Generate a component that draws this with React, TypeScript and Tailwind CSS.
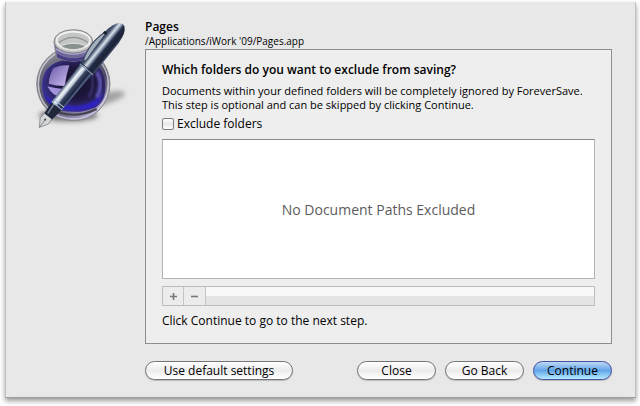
import { useState } from 'react'
import clsx from 'clsx'

function InkwellIcon() {
  return (
    <svg viewBox="90 50 300 345" className="h-[115px] w-[100px]" aria-hidden="true">
      <defs>
        <linearGradient id="glass" x1="0" y1="0" x2="0.6" y2="1">
          <stop offset="0" stopColor="#b4b4b8" />
          <stop offset="0.3" stopColor="#68677a" />
          <stop offset="0.7" stopColor="#4d4a66" />
          <stop offset="1" stopColor="#a9a2c4" />
        </linearGradient>
        <radialGradient id="ink" cx="0.55" cy="0.45" r="0.6">
          <stop offset="0" stopColor="#15102a" />
          <stop offset="0.5" stopColor="#1e173e" />
          <stop offset="0.78" stopColor="#322a70" />
          <stop offset="0.94" stopColor="#3a329a" />
          <stop offset="1" stopColor="#1d1660" />
        </radialGradient>
        <linearGradient id="shine" x1="0" y1="0" x2="1" y2="1">
          <stop offset="0" stopColor="#6a58a4" />
          <stop offset="1" stopColor="#cdbdf4" />
        </linearGradient>
        <linearGradient id="barrel" x1="0" y1="0" x2="0" y2="1">
          <stop offset="0" stopColor="#39445c" />
          <stop offset="0.14" stopColor="#7e8ca5" />
          <stop offset="0.26" stopColor="#f2f6fa" />
          <stop offset="0.42" stopColor="#c5cfdc" />
          <stop offset="0.54" stopColor="#3c4864" />
          <stop offset="0.78" stopColor="#1d2540" />
          <stop offset="0.9" stopColor="#56658a" />
          <stop offset="1" stopColor="#252e48" />
        </linearGradient>
        <linearGradient id="cap" x1="0" y1="0" x2="0" y2="1">
          <stop offset="0" stopColor="#2c3650" />
          <stop offset="0.2" stopColor="#4d5a75" />
          <stop offset="0.38" stopColor="#dbe2ea" />
          <stop offset="0.5" stopColor="#7c8aa3" />
          <stop offset="0.62" stopColor="#232c44" />
          <stop offset="0.86" stopColor="#1b2238" />
          <stop offset="1" stopColor="#48536c" />
        </linearGradient>
        <filter id="soft" x="-30%" y="-60%" width="160%" height="220%">
          <feGaussianBlur stdDeviation="8" />
        </filter>
        <filter id="blend" x="-20%" y="-20%" width="140%" height="140%">
          <feGaussianBlur stdDeviation="3" />
        </filter>
      </defs>
      <ellipse cx="305" cy="298" rx="72" ry="17" fill="#000" opacity="0.3" filter="url(#soft)" transform="rotate(-16 305 298)" />
      <ellipse cx="205" cy="345" rx="88" ry="18" fill="#000" opacity="0.5" filter="url(#soft)" />
      <ellipse cx="220" cy="251" rx="110" ry="110" fill="url(#glass)" stroke="#8b8a90" strokeWidth="3" />
      <ellipse cx="220" cy="251" rx="105" ry="105" fill="none" stroke="#dedde2" strokeWidth="5" opacity="0.75" />
      <path d="M127 245Q134 180 220 176T315 245Q322 300 285 322Q222 348 158 320Q122 292 127 245Z" fill="url(#ink)" />
      <path d="M134 285Q165 316 220 318Q280 315 307 278Q303 302 285 318Q220 343 158 316Q138 302 134 285Z" fill="#2d20c4" filter="url(#blend)" />
      <path d="M148 330Q220 384 292 330Q270 355 220 356Q172 355 148 330Z" fill="#b79ff0" />
      <path d="M150 326Q220 360 290 326" fill="none" stroke="#45424e" strokeWidth="6" />
      <path d="M160 204Q180 193 208 195Q198 225 194 257Q168 257 146 250Q148 224 160 204Z" fill="url(#shine)" />
      <path d="M142 258Q166 265 190 266L184 291Q158 288 142 258Z" fill="#a393dd" />
      <path d="M290 215Q312 252 290 292" fill="none" stroke="#6a63c8" strokeWidth="11" opacity="0.8" filter="url(#blend)" />
      <path d="M270 215Q290 250 266 290" fill="none" stroke="#5550a0" strokeWidth="6" opacity="0.6" filter="url(#blend)" />
      <path d="M162 124L169 170Q220 196 271 170L278 124Z" fill="#6f6998" stroke="#88858f" strokeWidth="3" />
      <path d="M171 160Q220 188 269 160V170Q220 196 171 170Z" fill="#453c86" />
      <path d="M168 146Q220 176 272 146" fill="none" stroke="#aaa4d0" strokeWidth="5" />
      <ellipse cx="220" cy="123" rx="58" ry="35" fill="#c4c4c6" stroke="#868686" strokeWidth="3" />
      <ellipse cx="220" cy="121" rx="50" ry="27" fill="#c4c6c5" stroke="#f2f2f2" strokeWidth="5" />
      <path d="M177 126Q220 96 263 126" fill="none" stroke="#8f9290" strokeWidth="4" />
      <path d="M182 136Q220 122 258 136Q246 147 220 148Q193 147 182 136Z" fill="#87918b" stroke="#e2e4e2" strokeWidth="3" />
      <g transform="translate(118 381) rotate(-51)">
        <path d="M0 0L24 -16L46 -14V14L25 15Z" fill="#d3d5d7" stroke="#73777c" strokeWidth="2" />
        <path d="M0 0L32 -1" stroke="#666" strokeWidth="2" />
        <circle cx="29" cy="-1" r="3" fill="#444" />
        <path d="M42 -15L88 -19V20L42 15Z" fill="#20273a" />
        <path d="M48 -9L84 -12V-7L48 -4Z" fill="#6d7a92" />
        <path d="M82 -20L225 -24V24L82 20Z" fill="url(#barrel)" />
        <path d="M222 -26L345 -28Q384 -24 396 -8Q401 0 396 8Q384 24 345 26L222 26Z" fill="url(#cap)" />
        <path d="M84 -20V20M93 -20V20" stroke="#a9c0d8" strokeWidth="3" />
        <path d="M224 -25V26" stroke="#8794ae" strokeWidth="3" />
        <path d="M229 -25V26" stroke="#1a2238" strokeWidth="2" />
        <path d="M348 -26Q310 -40 262 -31Q238 -26 240 -20Q246 -15 270 -19L348 -22Z" fill="#a4afbd" stroke="#39445b" strokeWidth="3" />
        <path d="M344 -30V-20" stroke="#141a28" strokeWidth="7" />
      </g>
    </svg>
  )
}

function PushButton({ label, primary = false, className }: { label: string; primary?: boolean; className?: string }) {
  return (
    <button
      type="button"
      className={clsx(
        'flex h-[19px] items-center justify-center rounded-full border text-[12px] leading-none whitespace-nowrap shadow-[0_1px_1px_rgba(0,0,0,0.2)]',
        primary
          ? 'border-[#4550a0] bg-linear-to-b from-[#bcd8f5] via-[#61a5e8] to-[#b4ecff]'
          : 'border-[#757575] bg-linear-to-b from-white via-[#ececec] to-white',
        className,
      )}
    >
      {label}
    </button>
  )
}

function ExcludePanel() {
  const [exclude, setExclude] = useState(false)

  return (
    <section className="border border-[#8e8e8e] bg-[#eeeeee] px-4 pt-3 pb-3.5">
      <h2 className="text-[12px] leading-4 font-semibold">Which folders do you want to exclude from saving?</h2>
      <p className="mt-1.5 text-[11px] leading-[14px]">
        Documents within your defined folders will be completely ignored by ForeverSave.
        <br />
        This step is optional and can be skipped by clicking Continue.
      </p>
      <label className="mt-1 flex h-4 w-fit items-center gap-[3px] text-[12px]">
        <input
          type="checkbox"
          checked={exclude}
          onChange={(e) => setExclude(e.target.checked)}
          className="size-3 appearance-none rounded-xs border border-[#7c7c7c] bg-linear-to-b from-white via-[#e8e8e8] to-white checked:bg-[#61a5e8]"
        />
        Exclude folders
      </label>
      <div className="mt-[7px] flex h-[140px] items-center justify-center border border-[#b4b4b4] border-t-[#8a8a8a] bg-white text-[14px] text-[#5c5c5c]">
        No Document Paths Excluded
      </div>
      <div className="mt-[7px] flex h-5 border border-[#bcbcbc] bg-linear-to-b from-[#f8f8f8] from-50% to-[#e4e4e4] to-50%">
        <button type="button" aria-label="Add folder" className="flex w-[21px] items-center justify-center border-r border-[#c4c4c4] bg-[#ececec]">
          <svg viewBox="0 0 7 7" className="size-[7px]"><path d="M0 3.5H7M3.5 0V7" stroke="#777" strokeWidth="1.6" /></svg>
        </button>
        <button type="button" aria-label="Remove folder" className="flex w-[22px] items-center justify-center border-r border-[#c4c4c4] bg-[#ececec]">
          <svg viewBox="0 0 7 7" className="size-[7px]"><path d="M0 3.5H7" stroke="#777" strokeWidth="1.6" /></svg>
        </button>
      </div>
      <p className="mt-[7px] text-[12px] leading-4">Click Continue to go to the next step.</p>
    </section>
  )
}

export default function App() {
  return (
    <div className="bg-white pt-0.5 pr-1 pb-2 pl-[5px] font-['Open_Sans',sans-serif] text-black">
      <main className="flex border border-t-0 border-[#c0c0c0] border-b-[#9c9c9c] bg-[#e8e8e8] pt-[15px] pr-[23px] pb-[17px] pl-6 shadow-[0_3px_5px_rgba(0,0,0,0.4)]">
        <div className="w-[115px] shrink-0">
          <InkwellIcon />
        </div>
        <div className="min-w-0 flex-1 pt-[3px]">
          <h1 className="text-[12px] leading-[14px] font-semibold">Pages</h1>
          <p className="mb-[1px] text-[10px] leading-[14px]">/Applications/iWork &apos;09/Pages.app</p>
          <ExcludePanel />
          <div className="mt-[17px] flex">
            <PushButton label="Use default settings" className="w-[148px]" />
            <PushButton label="Close" className="mr-[9px] ml-auto w-[79px]" />
            <PushButton label="Go Back" className="mr-[9px] w-[79px]" />
            <PushButton label="Continue" primary className="w-[79px]" />
          </div>
        </div>
      </main>
    </div>
  )
}
